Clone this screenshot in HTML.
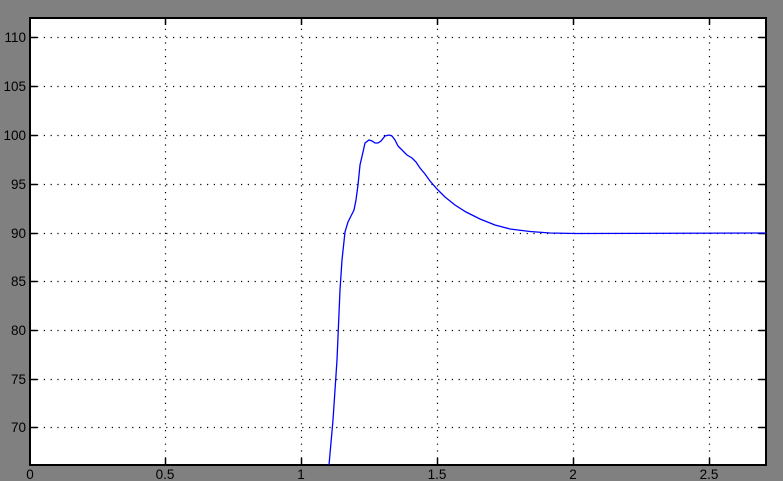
<!DOCTYPE html>
<html><head><style>
html,body{margin:0;padding:0;background:#808080;width:783px;height:481px;overflow:hidden}
svg{display:block}
text{font-family:"Liberation Sans",sans-serif;font-size:13.5px;fill:#000}
</style></head><body>
<svg width="783" height="481" viewBox="0 0 783 481">
<rect x="0" y="0" width="783" height="481" fill="#808080"/>
<rect x="30" y="18" width="736" height="447" fill="#fff" stroke="#000" stroke-width="2"/>
<g stroke="#000" stroke-width="1.2" stroke-dasharray="1.2,5.6">
<line x1="37" y1="37.5" x2="760" y2="37.5"/>
<line x1="37" y1="86.5" x2="760" y2="86.5"/>
<line x1="37" y1="135.5" x2="760" y2="135.5"/>
<line x1="37" y1="184.5" x2="760" y2="184.5"/>
<line x1="37" y1="233.5" x2="760" y2="233.5"/>
<line x1="37" y1="281.5" x2="760" y2="281.5"/>
<line x1="37" y1="330.5" x2="760" y2="330.5"/>
<line x1="37" y1="379.5" x2="760" y2="379.5"/>
<line x1="37" y1="427.5" x2="760" y2="427.5"/>
<line x1="165.5" y1="22" x2="165.5" y2="460"/>
<line x1="301.5" y1="22" x2="301.5" y2="460"/>
<line x1="437.5" y1="22" x2="437.5" y2="460"/>
<line x1="573.5" y1="22" x2="573.5" y2="460"/>
<line x1="709.5" y1="22" x2="709.5" y2="460"/>
</g>
<g stroke="#000" stroke-width="1.5">
<path d="M30 37.5h7M30 86.5h7M30 135.5h7M30 184.5h7M30 233.5h7M30 281.5h7M30 330.5h7M30 379.5h7M30 427.5h7"/>
<path d="M766 37.5h-7M766 86.5h-7M766 135.5h-7M766 184.5h-7M766 233.5h-7M766 281.5h-7M766 330.5h-7M766 379.5h-7M766 427.5h-7"/>
<path d="M165.5 465v-7M301.5 465v-7M437.5 465v-7M573.5 465v-7M709.5 465v-7M165.5 18v7M301.5 18v7M437.5 18v7M573.5 18v7M709.5 18v7"/>
</g>
<polyline fill="none" stroke="#0000ff" stroke-width="1.3" points="329,465 333,420 337,360 340,290 342,260 345,232 348,222 351,216 354,210 356,200 358,185 360,165 363,152 365,143 369,140 372,141 375,143 378,143 381,141 385,136 389,135 392,136 395,140 398,146 402,150 407,155 412,158 416,162 420,168 425,174 430,181 437,189 445,197 455,205 466,212 480,219 495,225 510,229 530,231.5 550,233 575,233.5 766,233"/>
<g text-anchor="end">
<text x="26" y="42">110</text>
<text x="26" y="91">105</text>
<text x="26" y="140">100</text>
<text x="26" y="189">95</text>
<text x="26" y="238">90</text>
<text x="26" y="286">85</text>
<text x="26" y="335">80</text>
<text x="26" y="384">75</text>
<text x="26" y="432">70</text>
</g>
<g text-anchor="middle">
<text x="30" y="479">0</text>
<text x="165" y="479">0.5</text>
<text x="301" y="479">1</text>
<text x="437" y="479">1.5</text>
<text x="573" y="479">2</text>
<text x="709" y="479">2.5</text>
</g>
</svg>
</body></html>
